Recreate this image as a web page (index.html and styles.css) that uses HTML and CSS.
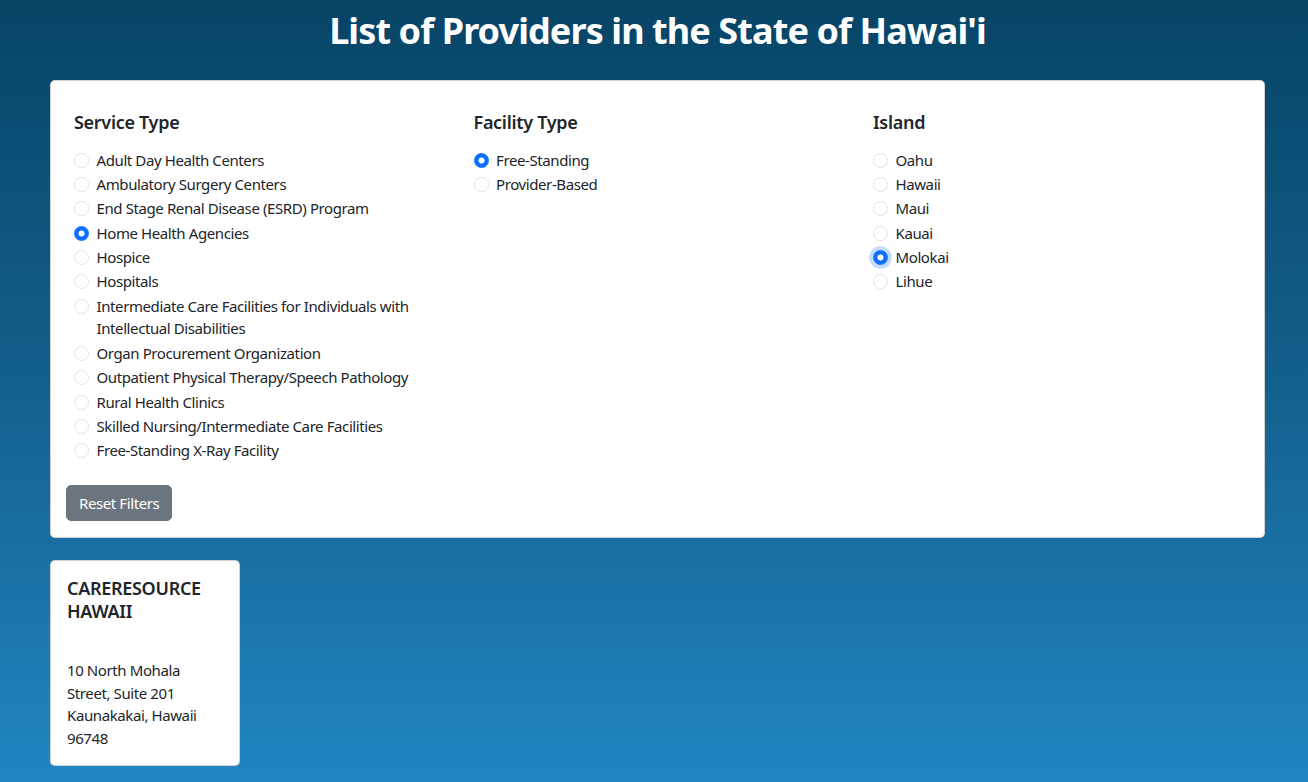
FILE: index.html
```html
<!DOCTYPE html>
<html lang="en">
<head>
<meta charset="utf-8">
<title>List of Providers in the State of Hawai'i</title>
<link rel="stylesheet" href="styles.css">
</head>
<body>
<div class="page">
  <h1 class="title">List of Providers in the State of Hawai'i</h1>
  <div class="card filters">
    <div class="filter-cols">
      <div class="col">
        <h5 class="col-title">Service Type</h5>
        <label class="check"><span class="radio"></span><span>Adult Day Health Centers</span></label>
        <label class="check"><span class="radio"></span><span>Ambulatory Surgery Centers</span></label>
        <label class="check"><span class="radio"></span><span>End Stage Renal Disease (ESRD) Program</span></label>
        <label class="check"><span class="radio checked"></span><span>Home Health Agencies</span></label>
        <label class="check"><span class="radio"></span><span>Hospice</span></label>
        <label class="check"><span class="radio"></span><span>Hospitals</span></label>
        <label class="check"><span class="radio"></span><span>Intermediate Care Facilities for Individuals with Intellectual Disabilities</span></label>
        <label class="check"><span class="radio"></span><span>Organ Procurement Organization</span></label>
        <label class="check"><span class="radio"></span><span>Outpatient Physical Therapy/Speech Pathology</span></label>
        <label class="check"><span class="radio"></span><span>Rural Health Clinics</span></label>
        <label class="check"><span class="radio"></span><span>Skilled Nursing/Intermediate Care Facilities</span></label>
        <label class="check"><span class="radio"></span><span>Free-Standing X-Ray Facility</span></label>
      </div>
      <div class="col">
        <h5 class="col-title">Facility Type</h5>
        <label class="check"><span class="radio checked"></span><span>Free-Standing</span></label>
        <label class="check"><span class="radio"></span><span>Provider-Based</span></label>
      </div>
      <div class="col">
        <h5 class="col-title">Island</h5>
        <label class="check"><span class="radio"></span><span>Oahu</span></label>
        <label class="check"><span class="radio"></span><span>Hawaii</span></label>
        <label class="check"><span class="radio"></span><span>Maui</span></label>
        <label class="check"><span class="radio"></span><span>Kauai</span></label>
        <label class="check"><span class="radio checked focused"></span><span>Molokai</span></label>
        <label class="check"><span class="radio"></span><span>Lihue</span></label>
      </div>
    </div>
    <button class="btn-reset" type="button">Reset Filters</button>
  </div>
  <div class="results">
    <div class="card provider">
      <h5 class="provider-name">CARERESOURCE HAWAII</h5>
      <p class="address">10 North Mohala<br>Street, Suite 201<br>Kaunakakai, Hawaii<br>96748</p>
    </div>
  </div>
</div>
</body>
</html>
```
FILE: styles.css
```css
html, body {
  margin: 0;
  padding: 0;
}
body {
  min-height: 782px;
  background: linear-gradient(180deg, #064465 0%, #14618e 50%, #2186c3 100%);
  font-family: "Noto Sans", "Open Sans", sans-serif;
  font-size: 15px;
  line-height: 22.5px;
  letter-spacing: -0.4px;
  color: #212529;
}
.page {
  padding: 0 43px 20px 50px;
}
.title {
  margin: 0;
  padding: 8px 0 27px;
  text-align: center;
  color: #ffffff;
  font-size: 36px;
  line-height: 45px;
  font-weight: 700;
  letter-spacing: -0.9px;
}
.card {
  background: #ffffff;
  border: 1px solid rgba(0, 0, 0, 0.175);
  border-radius: 5px;
  box-sizing: border-box;
}
.filters {
  padding: 16px 15px;
}
.filter-cols {
  display: grid;
  grid-template-columns: repeat(3, 1fr);
  column-gap: 31.5px;
  padding: 14px 8px 0;
}
.col-title {
  margin: 0 0 15px;
  font-size: 18px;
  line-height: 22.5px;
  font-weight: 600;
  letter-spacing: -0.3px;
}
.check {
  display: flex;
  align-items: flex-start;
  gap: 7.5px;
  min-height: 22.5px;
  margin-bottom: 1.9px;
  cursor: pointer;
}
.radio {
  flex: none;
  box-sizing: border-box;
  width: 15px;
  height: 15px;
  margin-top: 4px;
  border: 1px solid #dee2e6;
  border-radius: 50%;
  background: #fff;
}
.radio.checked {
  border-color: #0d6efd;
  background: radial-gradient(circle, #fff 0 2.8px, #0d6efd 3.3px);
}
.radio.focused {
  box-shadow: 0 0 0 3.75px rgba(13, 110, 253, 0.25);
}
.btn-reset {
  margin-top: 21px;
  display: block;
  padding: 6px 12px;
  border: 1px solid #6c757d;
  border-radius: 5px;
  background: #6c757d;
  color: #fff;
  font-family: inherit;
  font-size: 15px;
  line-height: 22.5px;
  letter-spacing: -0.4px;
}
.results {
  display: flex;
  margin-top: 22px;
}
.provider {
  width: 190px;
  padding: 16px;
}
.provider-name {
  margin: 0 0 37px;
  font-size: 18px;
  line-height: 22.5px;
  font-weight: 600;
  letter-spacing: -0.3px;
}
.address {
  margin: 0;
  white-space: nowrap;
}
```
